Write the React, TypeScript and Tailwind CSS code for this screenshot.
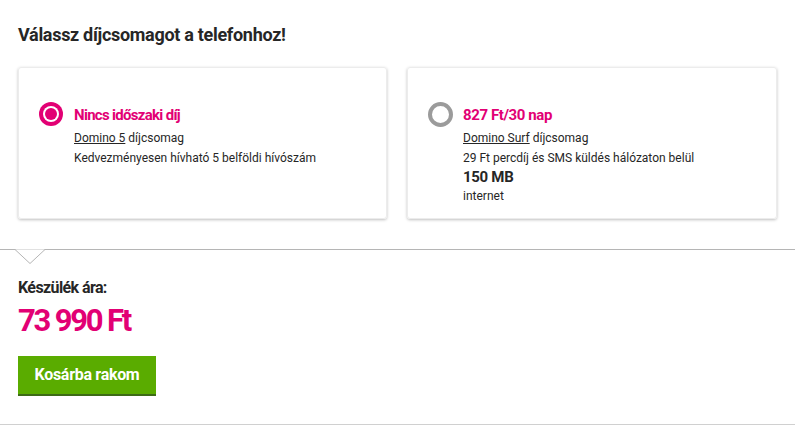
import React from "react";

const font = { fontFamily: "Roboto, 'Liberation Sans', sans-serif" };

function Radio({ checked }: { checked: boolean }) {
  return checked ? (
    <div className="w-[24px] h-[24px] rounded-full bg-[#e20074] flex items-center justify-center shrink-0">
      <div className="w-[16px] h-[16px] rounded-full bg-white flex items-center justify-center">
        <div className="w-[12px] h-[12px] rounded-full bg-[#e20074]" />
      </div>
    </div>
  ) : (
    <div className="w-[25px] h-[25px] rounded-full border-[4px] border-[#9b9b9b] shrink-0" />
  );
}

export default function App() {
  return (
    <div className="w-[795px] h-[426px] bg-white text-[#262626] overflow-hidden" style={font}>
      <div className="px-[18px] pt-[24px]">
        <h1 className="text-[18px] font-bold leading-[22px] tracking-[-0.3px]">Válassz díjcsomagot a telefonhoz!</h1>
        <div className="flex gap-[20px] mt-[21px]">
          <div className="w-[369px] h-[152px] rounded-[3px] border border-[#ececec] shadow-[0_1px_3px_rgba(0,0,0,0.25)] flex pl-[20px] pt-[34px] gap-[11px]">
            <Radio checked />
            <div className="flex flex-col pt-[2px]">
              <div className="text-[15px] font-bold text-[#e20074] leading-[22px] tracking-[-0.7px]">Nincs időszaki díj</div>
              <div className="text-[12px] leading-[20px] mt-[2px]"><span className="underline">Domino 5</span> díjcsomag</div>
              <div className="text-[12px] leading-[20px]">Kedvezményesen hívható 5 belföldi hívószám</div>
            </div>
          </div>
          <div className="w-[370px] h-[152px] rounded-[3px] border border-[#ececec] shadow-[0_1px_3px_rgba(0,0,0,0.25)] flex pl-[20px] pt-[34px] gap-[10px]">
            <Radio checked={false} />
            <div className="flex flex-col pt-[2px]">
              <div className="text-[15px] font-bold text-[#e20074] leading-[22px] tracking-[-0.4px]">827 Ft/30 nap</div>
              <div className="text-[12px] leading-[20px] mt-[2px]"><span className="underline">Domino Surf</span> díjcsomag</div>
              <div className="text-[12px] leading-[20px]">29 Ft percdíj és SMS küldés hálózaton belül</div>
              <div className="text-[15px] font-bold leading-[19px] tracking-[-0.3px]">150 MB</div>
              <div className="text-[12px] leading-[19px]">internet</div>
            </div>
          </div>
        </div>
      </div>
      <div className="relative mt-[30px] border-t border-[#b5b5b5] h-[176px] border-b border-b-[#d0d0d0]">
        <svg className="absolute left-[15px] top-[-1px]" width="30" height="16" viewBox="0 0 30 16">
          <path d="M0 0.5 L15 14.5 L30 0.5" fill="white" stroke="#b5b5b5" strokeWidth="1" />
          <rect x="1" y="-1" width="28" height="1.2" fill="white" />
        </svg>
        <div className="px-[18px] pt-[28px]">
          <div className="text-[16px] font-bold leading-[20px] tracking-[-0.6px]">Készülék ára:</div>
          <div className="text-[31px] font-bold text-[#e20074] leading-[36px] mt-[5px] tracking-[-2.2px]">73 990 Ft</div>
          <button className="mt-[17px] w-[138px] h-[40px] bg-[#5aac00] border-b-2 border-b-[#3d6b16] text-white text-[16px] font-bold tracking-[-0.3px]">Kosárba rakom</button>
        </div>
      </div>
    </div>
  );
}
